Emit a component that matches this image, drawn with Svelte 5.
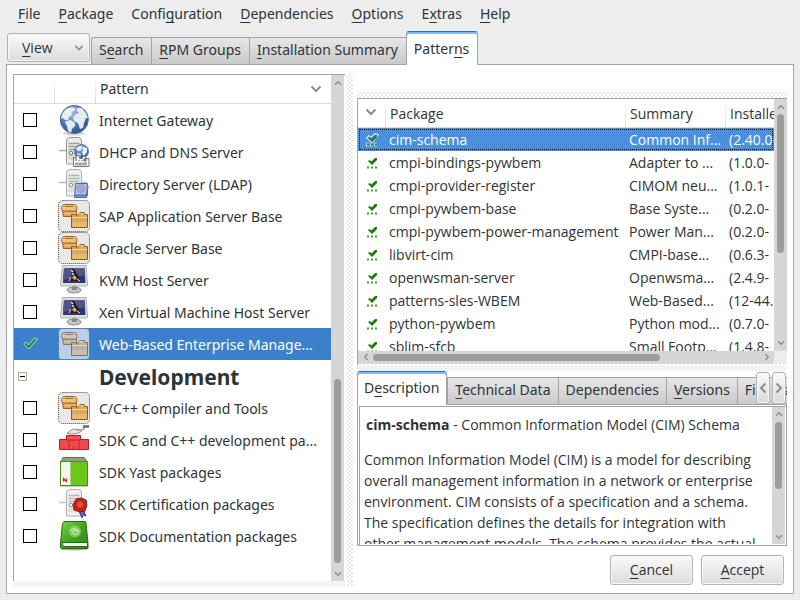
<script>
  const menus = [
    ['', 'F', 'ile'], ['', 'P', 'ackage'], ['Confi', 'g', 'uration'], ['', 'D', 'ependencies'],
    ['', 'O', 'ptions'], ['E', 'x', 'tras'], ['', 'H', 'elp']
  ];
  const views = [
    ['S', 'e', 'arch'], ['', 'R', 'PM Groups'], ['', 'I', 'nstallation Summary'], ['Patter', 'n', 's']
  ];
  const details = [
    ['D', 'e', 'scription'], ['', 'T', 'echnical Data'], ['Dependencies', '', ''], ['', 'V', 'ersions'], ['File List', '', '']
  ];
  const patterns = [
    { name: 'Internet Gateway', icon: 'globe' },
    { name: 'DHCP and DNS Server', icon: 'dns' },
    { name: 'Directory Server (LDAP)', icon: 'ldap' },
    { name: 'SAP Application Server Base', icon: 'boxes' },
    { name: 'Oracle Server Base', icon: 'boxes' },
    { name: 'KVM Host Server', icon: 'screen' },
    { name: 'Xen Virtual Machine Host Server', icon: 'screen' },
    { name: 'Web-Based Enterprise Manage...', icon: 'boxes', selected: true },
    { name: 'Development', heading: true },
    { name: 'C/C++ Compiler and Tools', icon: 'boxes' },
    { name: 'SDK C and C++ development pa...', icon: 'bricks' },
    { name: 'SDK Yast packages', icon: 'yast' },
    { name: 'SDK Certification packages', icon: 'cert' },
    { name: 'SDK Documentation packages', icon: 'book' }
  ];
  const packages = [
    ['cim-schema', 'Common Inf...', '(2.40.0-'],
    ['cmpi-bindings-pywbem', 'Adapter to ...', '(1.0.0-'],
    ['cmpi-provider-register', 'CIMOM neu...', '(1.0.1-'],
    ['cmpi-pywbem-base', 'Base Syste...', '(0.2.0-'],
    ['cmpi-pywbem-power-management', 'Power Man...', '(0.2.0-'],
    ['libvirt-cim', 'CMPI-base...', '(0.6.3-'],
    ['openwsman-server', 'Openwsma...', '(2.4.9-'],
    ['patterns-sles-WBEM', 'Web-Based...', '(12-44.'],
    ['python-pywbem', 'Python mod...', '(0.7.0-'],
    ['sblim-sfcb', 'Small Footp...', '(1.4.8-']
  ];
</script>

{#snippet mnemonic(parts)}{parts[0]}{#if parts[1]}<u>{parts[1]}</u>{/if}{parts[2]}{/snippet}

{#snippet chevron(dir, size)}
  <svg class="chev to-{dir}" width={size} height={size} viewBox="0 0 12 12" aria-hidden="true"><path d="M1.500 3.500 6 8l4.500-4.500" /></svg>
{/snippet}

{#snippet scrollbar(before, thumb, after, horizontal)}
  <div class="scroll" class:horizontal>
    <span class="arrow">{@render chevron(horizontal ? 'left' : 'up', 8)}</span>
    <div class="track">
      <i style="flex-grow:{before}"></i><i class="thumb" style="flex-grow:{thumb}"></i><i style="flex-grow:{after}"></i>
    </div>
    <span class="arrow">{@render chevron(horizontal ? 'right' : 'down', 8)}</span>
  </div>
{/snippet}

{#snippet server()}
  <path d="M1 14.500h8M24 14.500h5" stroke="#a9aba8" stroke-width="1.500" />
  <path d="M8.500 27V5q0-3.500 3.500-3.500h8q3.500 0 3.500 3.500v22q0 1-1 1h-13q-1 0-1-1z" fill="#ecedeb" stroke="#969894" />
  <path d="M10 6h12v18H10z" fill="#d6d8d5" />
  <path d="M11 7.500h10M11 10.500h10M11 13.500h10" stroke="#9fa19e" />
  <circle cx="13" cy="17" r="1.700" fill="#fff" stroke="#777" />
{/snippet}

{#snippet icon(kind, muted)}
  <svg class="icon" width="32" height="32" viewBox="0 0 32 32" fill="none" aria-hidden="true">
    {#if kind === 'globe'}
      <ellipse cx="16" cy="29.500" rx="11" ry="2" fill="#bbb" opacity=".6" />
      <circle cx="16.300" cy="15.500" r="14" fill="url(#sea)" stroke="#4466a0" />
      <path d="M4 10l4-5 6-2 4 2-2 2-3 1 1 3-3 2-1 3-3 0-2-2-2 1zM8 17l5-1 4 3 0 3-3 3-1 4-3-2-1-5-2-3zM19 4l5 0 4 5 2 5-2 0-2 5-1 5-3 1-2-6-4-2-1-4 3-3 3-1-2-2z" fill="#f0f4f7" fill-opacity=".92" />
    {:else if kind === 'dns'}
      {@render server()}
      <circle cx="23.500" cy="15.500" r="7" fill="url(#sea)" stroke="#5d7eae" />
      <path d="M18 12l4-2 3 1-2 3-3 1zM25 11l4 1 0 4-3 4-2-3 1-3zM19 17l4 1-1 3-2-1z" fill="#e8f0f5" />
      <path d="M15.500 21.500h3v-2h3v3h3v-2h3v2h3.500v8h-15.500z" fill="#fafafa" stroke="#777" />
      <path d="M18 22v3m3-1v1m3-1v1m2-2h2v2h-2zM18 26.500v3m2-3v3m2-3v3m2-3v3m2-3v3m2-3v3" stroke="#555" />
    {:else if kind === 'ldap'}
      <g opacity=".8">{@render server()}</g>
      <path d="M28 17l3 2-1 2v7h-3z" fill="#ef4a3c" /><path d="M28 16l2 2-1 4z" fill="#eed23a" />
      <path d="M17.500 15.500h12l-1 14h-12z" fill="#a8c1e4" stroke="#4a669b" />
      <path d="M16 27.500h12" stroke="#5874ae" stroke-width="2" />
      <circle cx="23" cy="20.500" r="3.700" stroke="#a481bc" /><circle cx="23" cy="20.500" r="1.500" stroke="#a481bc" />
    {:else if kind === 'boxes'}
      <rect x=".5" y=".5" width="31" height="31" rx="4" fill={muted ? '#b9cfe9' : '#e8e8e8'} stroke={muted ? '#2f5e91' : '#444'} stroke-dasharray="1 1" />
      <g class:muted>
        <path d="M4.500 9h14v7.500h-13z" fill="#dfa554" stroke="#99641f" />
        <path d="M5.500 4.500h11q2.500 0 2.500 4l-1 2.500h-13q-2-2-1.500-3.500z" fill="#eec384" stroke="#99641f" />
        <path d="M7 6.500h8.500" stroke="#a66e20" /><path d="M6 13.500h12" stroke="#f0c983" />
        <path d="M13.500 27.500v-13h4.500l1 2 3-4h4l1 2h2.500v13z" fill="#dca85b" stroke="#8f5c1c" />
        <path d="M14.500 17.500h14.500M21 14l3-1 1 2" stroke="#f7dba8" /><path d="M14.500 22h14.500v5h-14.500z" fill="#e9ba72" />
      </g>
    {:else if kind === 'screen'}
      <ellipse cx="16" cy="26" rx="7" ry="3" fill="#c6c8c5" stroke="#888a85" />
      <path d="M14 22h5v4h-5z" fill="#888" />
      <path d="M4.500 1.500h23.500l1.500 19.500q0 1-1 1H3.500q-1 0-1-1z" fill="#deded9" stroke="#b0b2ac" />
      <path d="M6 4h20.500l1 15H5z" fill="#35356c" /><path d="M6 4h20.500l.5 7L5 16z" fill="#535589" />
      <path d="M12 5h4l3 5 2 3 1 4h-10l2-7z" fill="#1c1c38" />
      <path d="M13 6l2 2M15 9v2" stroke="#f4f4f4" stroke-width="1.500" />
      <path d="M14 14l2-3 3 3-2 2z" fill="#ffad20" /><path d="M13 13l-2 4M19 15l3 2" stroke="#ebebed" />
    {:else if kind === 'bricks'}
      <path d="M1.500 15.500h29v10h-29z" fill="#f04a4e" stroke="#c51920" />
      <path d="M8.500 11.500h14v4.500h-14z" fill="#f45255" stroke="#c51920" />
      <path d="M11 16v9M21 16v9M15.500 22v4" stroke="#d0242c" />
      <path d="M9 9.500q6-7 15-3-5 5-15 3z" fill="#e6e7e4" stroke="#888a85" />
      <path d="M19 6.500l7-1-1-3" stroke="#aaa" stroke-width="1.500" /><path d="M25 2.500h6" stroke="#666" stroke-width="2.500" />
    {:else if kind === 'yast'}
      <path d="M2 29h28v2H2z" fill="#999" opacity=".5" />
      <path d="M5 1.500h21l3 4H3z" fill="#999b96" stroke="#458819" />
      <path d="M2.500 5.500h27v24h-27z" fill="#70c51a" stroke="#488f0f" />
      <path d="M3 6h9.500v23h-9.500z" fill="#f2f6ed" /><path d="M12.500 6v22" stroke="#9cd168" stroke-dasharray="1 1" />
      <path d="M5.500 25.500v-3l3 3v-3" stroke="#e0282b" stroke-width="1.200" />
    {:else if kind === 'cert'}
      <g opacity=".75">{@render server()}</g>
      <path d="M21 23l3 7 1-3 3 1-3-7z" fill="#5968b5" stroke="#334497" />
      <path d="M18 11l5-1 5 2 1 5-2 6-5 1-6-2-1-5z" fill="#c6231b" stroke="#8f1410" />
      <circle cx="22" cy="16.500" r="4" fill="#df4a3e" stroke="#aa1914" />
    {:else if kind === 'book'}
      <ellipse cx="16" cy="29" rx="14" ry="1.500" fill="#aaa" />
      <path d="M6 1.500h21q1 0 1 1l2 21v5H3.500q-2-1-1-5l2-20z" fill="url(#cover)" stroke="#236b0c" />
      <path d="M5 22.500h24.500v4H6q-3-2-1-4z" fill="#f4f4f0" stroke="#236b0c" />
      <circle cx="17" cy="11.500" r="6" fill="#9cda79" opacity=".65" />
      <path d="M12 11q4-5 9 0-1 5-5 3-3-3 1-4 3 0 2 2" stroke="#d5f2c4" />
    {/if}
  </svg>
{/snippet}

<svg class="defs" width="0" height="0" aria-hidden="true">
  <defs>
    <radialGradient id="sea" cx=".4" cy=".25" r=".8"><stop stop-color="#a6bfdf" /><stop offset=".6" stop-color="#4b74b3" /><stop offset="1" stop-color="#29508f" /></radialGradient>
    <linearGradient id="cover" x1="0" y1="0" x2="1" y2="1"><stop stop-color="#80d250" /><stop offset=".5" stop-color="#42a51d" /><stop offset="1" stop-color="#2d8512" /></linearGradient>
  </defs>
</svg>

<div class="app">
  <nav class="menubar">
    {#each menus as m}<button>{@render mnemonic(m)}</button>{/each}
  </nav>

  <div class="views">
    <button class="push view"><span><u>V</u>iew</span>{@render chevron('down', 10)}</button>
    <div class="tabs" role="tablist">
      {#each views as v, i}
        <button class="tab" class:active={i === 3} role="tab" aria-selected={i === 3}><span>{@render mnemonic(v)}</span></button>
      {/each}
    </div>
  </div>

  <main>
    <section class="left">
      <div class="frame patterns">
        <div class="viewport">
          <table>
            <colgroup><col class="c-check" /><col class="c-icon" /><col /></colgroup>
            <thead><tr><th></th><th></th><th><div class="sort">Pattern {@render chevron('down', 12)}</div></th></tr></thead>
            <tbody>
              {#each patterns as p, i}
                <tr class:selected={p.selected} class:heading={p.heading}>
                  {#if p.heading}
                    <td><button class="expander" aria-label="Collapse"></button></td>
                    <td></td>
                    <td>{p.name}</td>
                  {:else}
                    <td>
                      <div class="tick">
                        <input type="checkbox" id="p{i}" checked={p.selected} />
                        {#if p.selected}
                          <svg width="16" height="14" viewBox="0 0 16 14" aria-hidden="true"><path d="M1.500 7l2.500-2 2.500 3 6-7 3 1-8.500 10z" fill="#23864b" stroke="#b6dac7" /></svg>
                        {/if}
                      </div>
                    </td>
                    <td>{@render icon(p.icon, p.selected)}</td>
                    <td><label for="p{i}">{p.name}</label></td>
                  {/if}
                </tr>
              {/each}
            </tbody>
          </table>
        </div>
        {@render scrollbar(290, 185, 3, false)}
      </div>
      <div class="grip"></div>
    </section>

    <div class="grip"></div>

    <section class="right">
      <div class="grip"></div>
      <div class="frame packages">
        <div class="viewport">
          <table>
            <colgroup><col class="c-state" /><col class="c-name" /><col class="c-sum" /><col /></colgroup>
            <thead><tr><th>{@render chevron('down', 12)}</th><th>Package</th><th>Summary</th><th>Installed</th></tr></thead>
            <tbody>
              {#each packages as row, i}
                <tr class:current={i === 0}>
                  <td>
                    <svg class="state" width="14" height="14" viewBox="0 0 14 14" aria-hidden="true">
                      {#if i === 0}<path d="M2 5l2-2 2 2 4-4 3 1-6 7z" stroke="#b5d4ee" stroke-width="2" /><path d="M1 11.500h12" stroke="#b5d4ee" stroke-width="4" stroke-dasharray="3 1" />{/if}
                      <path d="M3 5l1.500-1 2 1.500L10 2h2v2L7 9z" fill={i ? '#1f7a0c' : '#23784a'} />
                      <path d="M2 11.500h2m2 0h2m2 0h2" stroke={i ? '#489a35' : '#2f8058'} stroke-width="2" />
                    </svg>
                  </td>
                  {#each row as cell}<td>{cell}</td>{/each}
                </tr>
              {/each}
            </tbody>
          </table>
        </div>
        {@render scrollbar(0, 140, 84, false)}
        {@render scrollbar(0, 287, 99, true)}
        <div class="corner"></div>
      </div>
      <div class="grip"></div>

      <div class="details">
        <div class="tabs" role="tablist">
          {#each details as d, i}
            <button class="tab" class:active={i === 0} role="tab" aria-selected={i === 0}><span>{@render mnemonic(d)}</span></button>
          {/each}
          <div class="steppers">
            <button class="push" aria-label="Previous tabs">{@render chevron('left', 12)}</button>
            <button class="push" aria-label="Next tabs">{@render chevron('right', 12)}</button>
          </div>
        </div>
        <div class="sheet">
          <div class="text">
            <p class="title"><b>cim-schema</b> - Common Information Model (CIM) Schema</p>
            <p>Common Information Model (CIM) is a model for describing overall management information in a network or enterprise environment. CIM consists of a specification and a schema. The specification defines the details for integration with other management models. The schema provides the actual</p>
          </div>
          {@render scrollbar(0, 68, 40, false)}
        </div>
      </div>

      <div class="actions">
        <button class="push"><span><u>C</u>ancel</span></button>
        <button class="push"><span><u>A</u>ccept</span></button>
      </div>
    </section>
  </main>
</div>

<style>
  :global(body) { background: #ededed; }
  .app {
    box-sizing: border-box;
    height: 100vh;
    display: flex;
    flex-direction: column;
    padding: 0 6px 6px;
    color: #2e3436;
    font: 14px/20px 'Open Sans', 'Noto Sans', sans-serif;
  }
  .defs { position: absolute; }
  button { font: inherit; color: inherit; margin: 0; padding: 0; border: 0; background: none; white-space: nowrap; }
  u { text-underline-offset: 3px; text-decoration-thickness: 1px; text-decoration-skip-ink: none; }

  .menubar, .tabs, .patterns { font-family: 'Noto Sans', 'Open Sans', sans-serif; }
  .menubar { box-sizing: border-box; display: flex; gap: 18px; height: 30px; flex: none; padding: 0 12px 2px; align-items: center; }

  .views { display: flex; flex: none; align-items: flex-end; height: 34px; }
  .push {
    box-sizing: border-box;
    border: 1px solid #b2b3b2;
    border-radius: 3px;
    background: linear-gradient(#fbfafb, #e9e7e9 60%, #dcdbdc);
    box-shadow: inset 0 0 0 1px #f7f6f7;
  }
  .view { display: flex; align-items: center; justify-content: space-between; width: 83px; height: 29px; margin: 0 1px 2px; padding: 0 5px 0 14px; }
  .tabs { display: flex; align-items: flex-end; min-width: 0; }
  .tab {
    box-sizing: border-box;
    height: 27px;
    flex: none;
    padding: 0 8px 2px 7px;
    border: 1px solid #a3a5a2;
    border-right: 0;
    border-bottom: 0;
    background: linear-gradient(#e8e6e8, #d9d8d9 50%, #cbcacb);
  }
  .tab:first-child { border-top-left-radius: 3px; }
  .tab.active {
    position: relative;
    height: 34px;
    margin-bottom: -1px;
    padding: 0 8px 0 7px;
    border-right: 1px solid #a3a5a2;
    border-top: 1px solid #2472c8;
    border-radius: 3px 3px 0 0;
    background: #fff;
    box-shadow: inset 0 2px #82b8f5;
  }

  main {
    flex: 1;
    min-height: 0;
    display: grid;
    grid-template-columns: minmax(0, 334fr) 6px minmax(0, 434fr);
    padding: 9px 6px 6px;
    border: 1px solid #a3a5a2;
    background: #fff;
  }
  .left, .right { display: flex; flex-direction: column; min-height: 0; min-width: 0; }
  .left { padding-right: 2px; }
  .right { padding: 18px 0 2px 4px; }
  .grip {
    min-height: 6px;
    flex: none;
    background: radial-gradient(circle at 1px 1px, #fff 1px, transparent 1px) 0 0 / 4px 4px,
      radial-gradient(circle at 3px 3px, #fff 1px, transparent 1px) 0 0 / 4px 4px, #e9e9e9;
  }
  .frame { border: 1px solid #a3a5a2; border-right: 0; border-bottom: 0; display: grid; grid-template-columns: minmax(0, 1fr) 13px; min-height: 0; }
  .patterns { flex: 1; padding-right: 1px; }
  .packages { flex: 266; flex-basis: 0; grid-template-rows: minmax(0, 1fr) 13px; padding-bottom: 1px; }
  .viewport { overflow: hidden; min-height: 0; }
  .corner { background: #ededed; }

  table { width: 100%; table-layout: fixed; border-collapse: collapse; }
  th, td { padding: 0; text-align: left; font-weight: 400; white-space: nowrap; overflow: hidden; }
  th { height: 28px; border-bottom: 1px solid #d9d9d9; background: linear-gradient(transparent, #d9d9d9) right / 1px 100% no-repeat; }
  th:last-child { background: none; }
  .c-check, .c-icon { width: 41px; }
  .patterns td { height: 32px; }
  .patterns td:nth-child(3) { padding: 2px 0 0 3px; height: 30px; }
  .patterns th:nth-child(3) { padding-left: 4px; }
  .patterns td:nth-child(2) { padding-left: 3px; }
  .sort { display: flex; align-items: center; justify-content: space-between; padding-right: 9px; }
  .icon { display: block; }
  .muted { filter: saturate(.3); opacity: .85; }
  .selected { background: #3a80cb; color: #fff; }
  .heading { font-size: 21px; }
  .heading td { font-weight: 700; }
  .tick { display: flex; padding-left: 9px; }
  input { appearance: none; box-sizing: border-box; width: 14px; height: 14px; margin: 0; border: 1px solid #000; background: #fff; }
  input:checked { border: 0; background: none; }
  .tick svg { position: absolute; margin-left: -1px; pointer-events: none; }
  .expander { display: block; width: 9px; height: 9px; margin-left: 4px; border: 1px solid #b9aa96; background: linear-gradient(#000, #000) center / 5px 1px no-repeat; box-sizing: border-box; }

  .c-state { width: 28px; }
  .c-name { width: 240px; }
  .c-sum { width: 100px; }
  .packages td { height: 23px; padding-left: 3px; }
  .packages th { height: 26px; padding: 2px 0 0 4px; }
  .packages th:first-child { padding: 0 0 2px 7px; }
  .packages td:first-child { padding-left: 7px; }
  .state { display: block; }
  .current { background: #4a90de; color: #fff; outline: 1px dotted #111; outline-offset: -2px; }

  .chev { display: block; fill: none; stroke: #8b8e8b; stroke-width: 2; flex: none; }
  .to-up { transform: rotate(180deg); }
  .to-left { transform: rotate(90deg); }
  .to-right { transform: rotate(-90deg); }
  .scroll { display: flex; flex-direction: column; min-height: 0; background: #d6d6d6; }
  .horizontal { flex-direction: row; }
  .arrow { display: grid; place-items: center; flex: 0 0 15px; }
  .track { flex: 1; display: flex; flex-direction: inherit; align-items: center; }
  .track i { flex-basis: 0; }
  .thumb { width: 7px; border-radius: 4px; background: #9b9e9b; }
  .horizontal .thumb { width: auto; height: 7px; }

  .details { flex: 176; flex-basis: 0; min-height: 0; display: flex; flex-direction: column; }
  .details .tabs { flex: none; position: relative; overflow: hidden; height: 34px; margin-bottom: -1px; z-index: 1; }
  .details .tab { margin-bottom: 1px; padding: 0 7px 2px; }
  .details .tab.active { margin-bottom: 0; padding: 0 7px 0 6px; }
  .steppers { position: absolute; right: 1px; top: 1px; display: flex; gap: 2px; }
  .steppers .push { width: 14px; height: 32px; display: grid; place-items: center; }
  .sheet { flex: 1; min-height: 0; display: grid; grid-template-columns: minmax(0, 1fr) 13px; border: 1px solid #a3a5a2; box-shadow: inset 1px 1px #fff, inset 2px 2px #a3a5a2; padding: 2px 1px 1px 2px; }
  .text { overflow: hidden; padding: 7px 10px 0 4px; line-height: 21px; min-height: 0; box-sizing: border-box; }
  p { margin: 0; }
  .title { padding: 0 2px; margin-bottom: 14px; }
  .actions { display: flex; justify-content: flex-end; gap: 8px; padding: 9px 3px 0 0; flex: none; }
  .actions .push { width: 83px; height: 30px; }
</style>
